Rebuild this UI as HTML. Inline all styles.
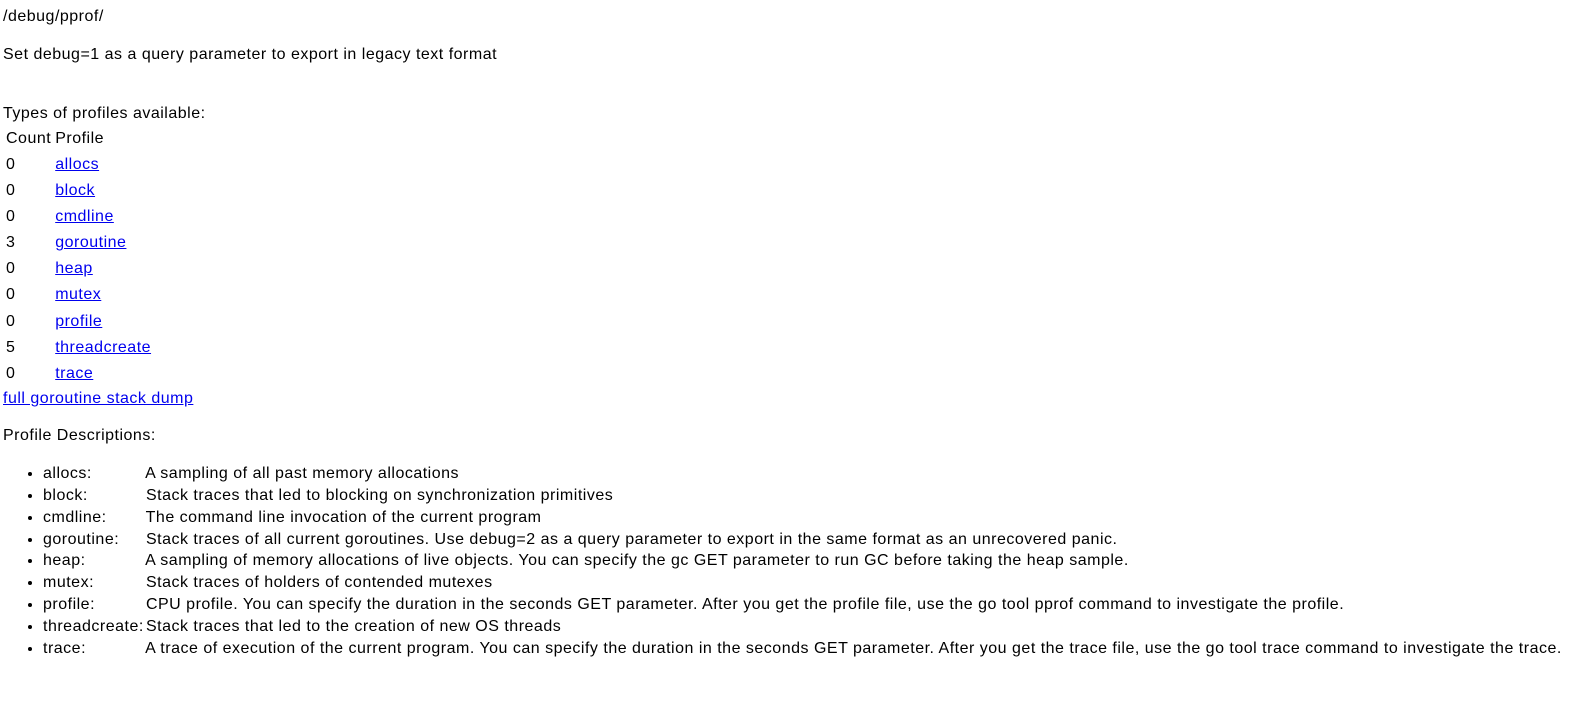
<!DOCTYPE html>
<html><head><meta charset="utf-8"><title>/debug/pprof/</title>
<style>
body{margin:6px 3px 4px 3px;font-family:"Liberation Sans",sans-serif;font-size:16px;line-height:21.8px;letter-spacing:0.5px;color:#000;background:#fff;}
.profile-name{display:inline-block;width:98px;}
a{color:#0000ee;}
p{margin:16px 0;}
table{border-spacing:2px;}
td{padding:1px;line-height:22.05px;}
ul{margin:16px 0;padding-left:40px;}
li{line-height:21.8px;}
</style></head><body>
/debug/pprof/
<br>
<p>Set debug=1 as a query parameter to export in legacy text format</p>
<br>
Types of profiles available:
<table>
<thead><tr><td>Count</td><td>Profile</td></tr></thead>
<tr><td>0</td><td><a href="allocs?debug=1">allocs</a></td></tr>
<tr><td>0</td><td><a href="block?debug=1">block</a></td></tr>
<tr><td>0</td><td><a href="cmdline?debug=1">cmdline</a></td></tr>
<tr><td>3</td><td><a href="goroutine?debug=1">goroutine</a></td></tr>
<tr><td>0</td><td><a href="heap?debug=1">heap</a></td></tr>
<tr><td>0</td><td><a href="mutex?debug=1">mutex</a></td></tr>
<tr><td>0</td><td><a href="profile?debug=1">profile</a></td></tr>
<tr><td>5</td><td><a href="threadcreate?debug=1">threadcreate</a></td></tr>
<tr><td>0</td><td><a href="trace?debug=1">trace</a></td></tr>
</table>
<a href="goroutine?debug=2">full goroutine stack dump</a>
<br>
<p>
Profile Descriptions:
</p>
<ul>
<li><div class="profile-name">allocs: </div> A sampling of all past memory allocations</li>
<li><div class="profile-name">block: </div> Stack traces that led to blocking on synchronization primitives</li>
<li><div class="profile-name">cmdline: </div> The command line invocation of the current program</li>
<li><div class="profile-name">goroutine: </div> Stack traces of all current goroutines. Use debug=2 as a query parameter to export in the same format as an unrecovered panic.</li>
<li><div class="profile-name">heap: </div> A sampling of memory allocations of live objects. You can specify the gc GET parameter to run GC before taking the heap sample.</li>
<li><div class="profile-name">mutex: </div> Stack traces of holders of contended mutexes</li>
<li><div class="profile-name">profile: </div> CPU profile. You can specify the duration in the seconds GET parameter. After you get the profile file, use the go tool pprof command to investigate the profile.</li>
<li><div class="profile-name">threadcreate: </div> Stack traces that led to the creation of new OS threads</li>
<li><div class="profile-name">trace: </div> A trace of execution of the current program. You can specify the duration in the seconds GET parameter. After you get the trace file, use the go tool trace command to investigate the trace.</li>
</ul>
</body></html>
